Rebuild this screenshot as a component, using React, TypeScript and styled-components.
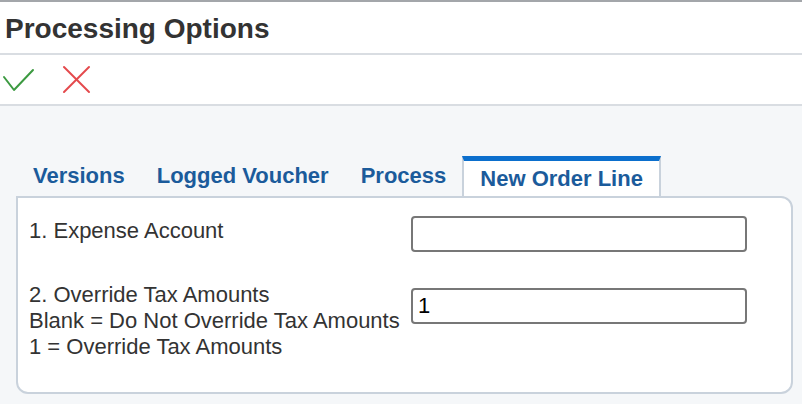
import React from "react";
import styled, { createGlobalStyle } from "styled-components";

const GlobalStyle = createGlobalStyle`
  html, body { margin: 0; padding: 0; background: #f5f7f9; }
  body { font-family: "Liberation Sans", Arial, sans-serif; }
  * { box-sizing: border-box; }
`;

const Page = styled.div`
  width: 802px;
  height: 404px;
  display: flex;
  flex-direction: column;
  background: #f5f7f9;
  overflow: hidden;
`;

const Header = styled.header`
  height: 55px;
  background: #ffffff;
  border-top: 2px solid #a3a6aa;
  border-bottom: 2px solid #d9dde2;
  padding: 11px 0 0 5px;
`;

const Title = styled.h1`
  margin: 0;
  font-size: 28px;
  line-height: 32px;
  font-weight: 700;
  color: #333333;
`;

const Toolbar = styled.div`
  height: 52px;
  background: #ffffff;
  border-bottom: 2px solid #d9dde2;
  display: flex;
  align-items: center;
  padding-left: 2px;
  gap: 26px;
`;

const IconButton = styled.button`
  border: 0;
  padding: 0;
  margin: 0;
  background: transparent;
  display: flex;
  cursor: pointer;
`;

const Body = styled.main`
  flex: 1;
  padding: 50px 9px 10px 16px;
  display: flex;
  flex-direction: column;
`;

const TabStrip = styled.div`
  display: flex;
  align-items: flex-end;
  height: 40px;
  padding-left: 1px;
`;

const Tab = styled.div<{ $active?: boolean }>`
  font-size: 22px;
  line-height: 26px;
  font-weight: 700;
  color: #1b5b9b;
  white-space: nowrap;
  padding: ${(p) => (p.$active ? "5px 16px 4px" : "0 16px 7px")};
  background: ${(p) => (p.$active ? "#ffffff" : "transparent")};
  border-top: ${(p) => (p.$active ? "5px solid #0b6fcd" : "0")};
  border-left: ${(p) => (p.$active ? "2px solid #c9d2dc" : "0")};
  border-right: ${(p) => (p.$active ? "2px solid #c9d2dc" : "0")};
`;

const Panel = styled.section`
  height: 198px;
  background: #ffffff;
  border: 2px solid #c9d2dc;
  border-radius: 0 12px 12px 12px;
  padding: 17px 0 0 11px;
  display: grid;
  grid-template-columns: 382px 336px;
  grid-auto-rows: min-content;
  row-gap: 27px;
  align-items: start;
`;

const Label = styled.div`
  padding-top: 3px;
  font-size: 22px;
  line-height: 26px;
  color: #333333;
`;

const Field = styled.input<{ $offset: number }>`
  margin-top: ${(p) => p.$offset}px;
  width: 336px;
  height: 36px;
  border: 2px solid #777777;
  border-radius: 4px;
  padding: 0 5px;
  font-family: "Liberation Sans", Arial, sans-serif;
  font-size: 22px;
  color: #000000;
  background: #ffffff;
  outline: none;
`;

const CheckIcon = () => (
  <svg width="34" height="30" viewBox="0 0 34 30">
    <polyline points="2,13 12,26 31,6" fill="none" stroke="#3c9a41" strokeWidth="2" strokeLinecap="round" strokeLinejoin="round" />
  </svg>
);

const CloseIcon = () => (
  <svg width="30" height="30" viewBox="0 0 30 30">
    <line x1="2" y1="3" x2="27" y2="28" stroke="#e4494c" strokeWidth="2" strokeLinecap="round" />
    <line x1="27" y1="3" x2="2" y2="28" stroke="#e4494c" strokeWidth="2" strokeLinecap="round" />
  </svg>
);

export default function App() {
  return (
    <Page>
      <GlobalStyle />
      <Header>
        <Title>Processing Options</Title>
      </Header>
      <Toolbar>
        <IconButton aria-label="OK"><CheckIcon /></IconButton>
        <IconButton aria-label="Cancel"><CloseIcon /></IconButton>
      </Toolbar>
      <Body>
        <TabStrip>
          <Tab>Versions</Tab>
          <Tab>Logged Voucher</Tab>
          <Tab>Process</Tab>
          <Tab $active>New Order Line</Tab>
        </TabStrip>
        <Panel>
          <Label>1. Expense Account</Label>
          <Field $offset={1} defaultValue="" />
          <Label>
            2. Override Tax Amounts
            <br />
            Blank = Do Not Override Tax Amounts
            <br />
            1 = Override Tax Amounts
          </Label>
          <Field $offset={9} defaultValue="1" />
        </Panel>
      </Body>
    </Page>
  );
}
